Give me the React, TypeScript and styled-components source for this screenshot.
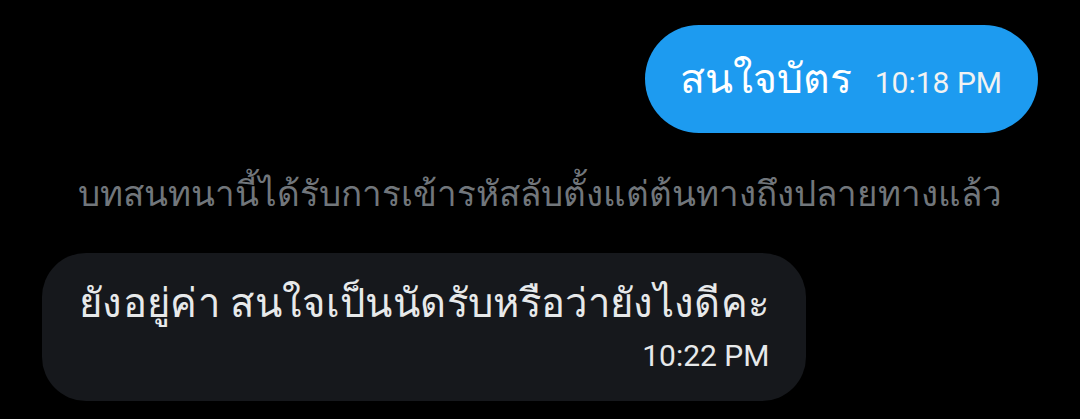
import React from "react";
import styled, { createGlobalStyle } from "styled-components";

const Global = createGlobalStyle`
  html, body { margin: 0; padding: 0; background: #000; }
  body { font-family: Roboto, "Noto Sans", sans-serif; }
`;

const Page = styled.div`
  width: 1080px;
  height: 419px;
  background: #000;
  box-sizing: border-box;
  padding: 25px 42px 0 42px;
  display: flex;
  flex-direction: column;
  overflow: hidden;
`;

const Row = styled.div<{ $align: "start" | "end" | "center" }>`
  display: flex;
  justify-content: ${(p) => (p.$align === "end" ? "flex-end" : p.$align === "start" ? "flex-start" : "center")};
`;

const SentBubble = styled.div`
  background: #1d9bf0;
  border-radius: 54px;
  height: 108px;
  box-sizing: border-box;
  padding: 0 36px 0 35px;
  display: flex;
  align-items: center;
  gap: 23px;
  color: #fff;
`;

const Msg = styled.span`
  font-size: 41px;
  line-height: 48px;
  color: #fff;
`;

const Time = styled.span<{ $light?: boolean }>`
  font-family: Roboto, sans-serif;
  font-size: 30px;
  line-height: 34px;
  color: ${(p) => (p.$light ? "#f2f2f2" : "#e7e9ea")};
  padding-top: 8px;
`;

const Notice = styled.div`
  margin-top: 40px;
  font-size: 35px;
  line-height: 44px;
  color: #71767b;
  text-align: center;
`;

const RecvBubble = styled.div`
  margin-top: 36px;
  background: #16181c;
  border-radius: 44px;
  padding: 24px 37px 28px 37px;
  display: flex;
  flex-direction: column;
  align-items: flex-end;
`;

const RecvText = styled.div`
  font-size: 40px;
  letter-spacing: 0.35px;
  line-height: 54px;
  color: #e7e9ea;
  align-self: flex-start;
`;

export default function App() {
  return (
    <>
      <Global />
      <Page>
        <Row $align="end">
          <SentBubble>
            <Msg>สนใจบัตร</Msg>
            <Time $light>10:18 PM</Time>
          </SentBubble>
        </Row>
        <Notice>บทสนทนานี้ได้รับการเข้ารหัสลับตั้งแต่ต้นทางถึงปลายทางแล้ว</Notice>
        <Row $align="start">
          <RecvBubble>
            <RecvText>ยังอยู่ค่า สนใจเป็นนัดรับหรือว่ายังไงดีคะ</RecvText>
            <Time>10:22 PM</Time>
          </RecvBubble>
        </Row>
      </Page>
    </>
  );
}
